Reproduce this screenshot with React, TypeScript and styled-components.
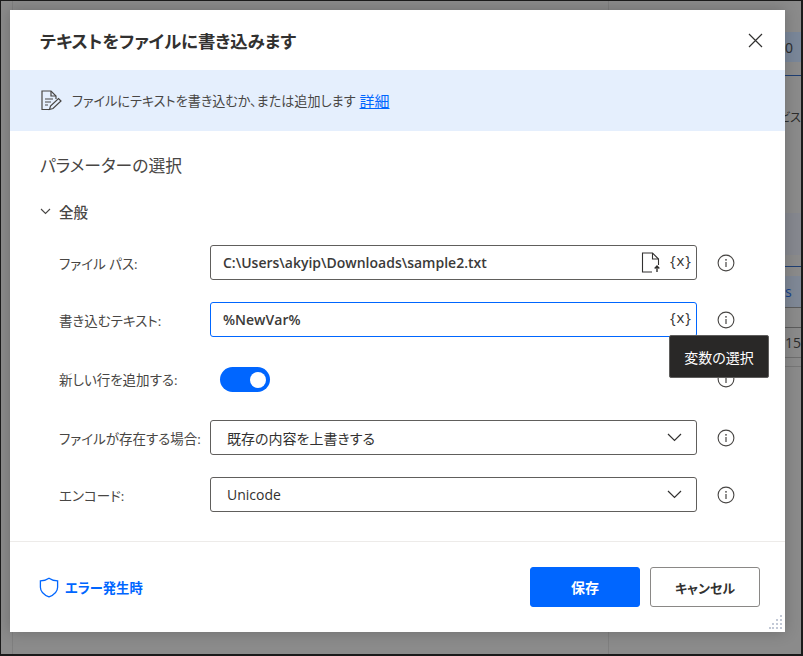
import React from "react";
import styled, { createGlobalStyle } from "styled-components";

const GlobalStyle = createGlobalStyle`
  html, body {
    margin: 0;
    padding: 0;
    background: #8a8a8a;
  }
  * {
    box-sizing: border-box;
  }
`;

const FONT = `"Open Sans", "Noto Sans CJK JP", sans-serif`;
const BLUE = "#0066ff";

const Page = styled.div`
  position: relative;
  width: 803px;
  height: 656px;
  overflow: hidden;
  font-family: ${FONT};
  font-feature-settings: "palt";
  color: #323130;
  border-style: solid;
  border-color: #1a1a1a;
  border-width: 1px 2px 2px 1px;
  background-color: #8b8b8b;
  background-image: linear-gradient(#7f7f7f, #7f7f7f), linear-gradient(#7f7f7f, #7f7f7f);
  background-repeat: no-repeat;
  background-size: 1px 100%, 1px 100%;
  background-position: 11px 0, 607px 0;
`;

const Backdrop = styled.div`
  display: flex;
  flex-direction: column;
  align-items: flex-end;
  height: 100%;
  font-size: 14px;
  color: #2c2c2c;
`;

const BackStrip = styled.div<{ $top: number; $height: number; $bg?: string; $line?: string; $end?: boolean }>`
  width: 24px;
  flex: none;
  height: ${({ $height }) => $height}px;
  margin-top: ${({ $top }) => $top}px;
  padding-left: 8px;
  display: flex;
  align-items: center;
  justify-content: ${({ $end }) => ($end ? "flex-end" : "flex-start")};
  white-space: nowrap;
  background: ${({ $bg }) => $bg || "transparent"};
  border-bottom: ${({ $line }) => ($line ? `1px solid ${$line}` : "none")};
`;

const BackText = styled.span<{ $color?: string; $size?: number }>`
  font-size: ${({ $size }) => $size || 14}px;
  color: ${({ $color }) => $color || "#2c2c2c"};
`;

const Modal = styled.div`
  position: absolute;
  left: 9px;
  top: 9px;
  width: 775px;
  height: 622px;
  display: flex;
  flex-direction: column;
  background: #fff;
  box-shadow: 0 0 14px rgba(0, 0, 0, 0.22);
`;

const Header = styled.div`
  height: 60px;
  flex: none;
  display: flex;
  align-items: center;
  justify-content: space-between;
  padding: 0 22px 0 30px;
`;

const Title = styled.h1`
  margin: 0;
  font-size: 17.4px;
  font-weight: 700;
  color: #323130;
`;

const CloseButton = styled.button`
  display: flex;
  padding: 0;
  border: none;
  background: none;
  color: #323130;
`;

const Banner = styled.div`
  height: 61px;
  flex: none;
  display: flex;
  align-items: center;
  padding-left: 30px;
  background: #e5effd;
  font-size: 13.1px;
  color: #484644;
`;

const BannerIcon = styled.svg`
  width: 22px;
  height: 24px;
  margin-right: 10px;
  flex: none;
`;

const MoreLink = styled.a`
  margin-left: 4px;
  font-size: 15px;
  color: ${BLUE};
  text-decoration: underline;
`;

const Body = styled.div`
  flex: 1;
  padding: 0 0 0 30px;
`;

const SectionTitle = styled.h2`
  margin: 23px 0 0;
  height: 24px;
  line-height: 24px;
  font-size: 16.8px;
  font-weight: 400;
  color: #484644;
`;

const GroupHeader = styled.div`
  display: flex;
  align-items: center;
  height: 20px;
  margin-top: 23px;
  font-size: 14.5px;
  font-weight: 500;
  color: #484644;
`;

const GroupChevron = styled.svg`
  width: 11px;
  height: 7px;
  margin-right: 8px;
`;

const Form = styled.div`
  display: flex;
  flex-direction: column;
  gap: 22px;
  margin-top: 24px;
  padding-left: 19px;
`;

const Row = styled.div<{ $height?: number }>`
  display: flex;
  align-items: center;
  height: ${({ $height }) => $height || 35}px;
`;

const Label = styled.label`
  width: 151px;
  flex: none;
  font-size: 13.5px;
  white-space: nowrap;
  color: #484644;
`;

const Field = styled.div<{ $focused?: boolean }>`
  width: 487px;
  height: 35px;
  flex: none;
  display: flex;
  align-items: center;
  padding: 0 4px 0 12px;
  border: 1px solid ${({ $focused }) => ($focused ? BLUE : "#605e5c")};
  border-radius: 3px;
  font-size: 14px;
  font-weight: 600;
  color: #3b3a39;
`;

const FieldValue = styled.span`
  flex: 1;
  white-space: nowrap;
`;

const VarButton = styled.span`
  font-size: 15px;
  font-weight: 400;
  letter-spacing: 1px;
  color: #323130;
  margin-top: -6px;
`;

const FileIcon = styled.svg`
  width: 21px;
  height: 21px;
  margin-right: 8px;
  flex: none;
`;

const SelectBox = styled.div`
  width: 487px;
  height: 35px;
  flex: none;
  display: flex;
  align-items: center;
  justify-content: space-between;
  padding: 0 14px 0 16px;
  border: 1px solid #605e5c;
  border-radius: 3px;
  font-size: 14px;
  color: #323130;
`;

const Toggle = styled.div`
  width: 50px;
  height: 25px;
  margin: 2px 427px 0 10px;
  flex: none;
  display: flex;
  align-items: center;
  justify-content: flex-end;
  padding-right: 4px;
  border-radius: 13px;
  background: ${BLUE};
`;

const Knob = styled.div`
  width: 16px;
  height: 16px;
  border-radius: 50%;
  background: #fff;
`;

const InfoIcon = styled.svg`
  width: 18px;
  height: 18px;
  margin-left: 20px;
  flex: none;
`;

const Footer = styled.div`
  height: 91px;
  flex: none;
  display: flex;
  align-items: center;
  justify-content: space-between;
  padding: 0 25px 0 29px;
  border-top: 1px solid #edebe9;
`;

const ErrorLink = styled.div`
  display: flex;
  align-items: center;
  gap: 6px;
  font-size: 13.3px;
  font-weight: 700;
  color: ${BLUE};
`;

const Actions = styled.div`
  display: flex;
  gap: 10px;
`;

const Button = styled.button<{ $primary?: boolean }>`
  width: 110px;
  height: 40px;
  font-family: ${FONT};
  font-feature-settings: "palt";
  font-size: ${({ $primary }) => ($primary ? 14 : 13)}px;
  font-weight: 700;
  border-radius: 3px;
  border: 1px solid ${({ $primary }) => ($primary ? BLUE : "#8a8886")};
  background: ${({ $primary }) => ($primary ? BLUE : "#fff")};
  color: ${({ $primary }) => ($primary ? "#fff" : "#323130")};
`;

const Tooltip = styled.div`
  position: absolute;
  left: 668px;
  top: 334px;
  width: 100px;
  height: 43px;
  display: flex;
  align-items: center;
  justify-content: center;
  background: #292827;
  border: 1px solid #5f5e5d;
  border-radius: 2px;
  font-size: 14px;
  color: #fff;
`;

const Grip = styled.svg`
  position: absolute;
  right: 2px;
  bottom: 2px;
  width: 14px;
  height: 15px;
`;

const Info = () => (
  <InfoIcon viewBox="0 0 18 18" fill="none">
    <circle cx="9" cy="9" r="7.9" stroke="#484644" strokeWidth="1.1" />
    <rect x="8.4" y="8" width="1.2" height="5" fill="#484644" />
    <circle cx="9" cy="5.8" r="0.9" fill="#484644" />
  </InfoIcon>
);

const Chevron = () => (
  <svg width="15" height="9" viewBox="0 0 15 9" fill="none">
    <path d="M1 1l6.5 6.5L14 1" stroke="#323130" strokeWidth="1.2" />
  </svg>
);

const App: React.FC = () => {
  return (
    <>
      <GlobalStyle />
      <Page>
        <Backdrop>
          <BackStrip $top={31} $height={30} $bg="#7a8799">
            <BackText>0</BackText>
          </BackStrip>
          <BackStrip $top={0} $height={14} $line="#1f3f73" />
          <BackStrip $top={30} $height={22} $end>
            <BackText $size={12}>ビス</BackText>
          </BackStrip>
          <BackStrip $top={85} $height={42} $bg="#86888f" />
          <BackStrip $top={0} $height={12} $line="#1f3f73" />
          <BackStrip $top={9} $height={32} $bg="#7f8896" $line="#5c5c5c">
            <BackText $color="#14418c">s</BackText>
          </BackStrip>
          <BackStrip $top={0} $height={20} $line="#5c5c5c" />
          <BackStrip $top={0} $height={30} $line="#6e6e6e">
            <BackText>15</BackText>
          </BackStrip>
          <BackStrip $top={8} $height={1} $bg="#777" />
        </Backdrop>

        <Modal>
          <Header>
            <Title>テキストをファイルに書き込みます</Title>
            <CloseButton aria-label="閉じる">
              <svg width="15" height="15" viewBox="0 0 15 15" fill="none">
                <path d="M1 1l13 13M14 1L1 14" stroke="#323130" strokeWidth="1.2" />
              </svg>
            </CloseButton>
          </Header>

          <Banner>
            <BannerIcon viewBox="0 0 22 24" fill="none" stroke="#484644" strokeWidth="1.2">
              <path d="M10 20.5H2V2h9l5 5v3" />
              <path d="M11 2v5h5" />
              <path d="M5 10h8M5 13h6M5 16h3" />
              <path d="M9.5 20.5l1-3.5 8-7.5 2.5 2.5-8 7.5z" />
            </BannerIcon>
            ファイルにテキストを書き込むか、または追加します
            <MoreLink href="#">詳細</MoreLink>
          </Banner>

          <Body>
            <SectionTitle>パラメーターの選択</SectionTitle>
            <GroupHeader>
              <GroupChevron viewBox="0 0 11 7" fill="none">
                <path d="M1 1l4.5 4.5L10 1" stroke="#484644" strokeWidth="1.1" />
              </GroupChevron>
              全般
            </GroupHeader>

            <Form>
              <Row>
                <Label>ファイル パス:</Label>
                <Field>
                  <FieldValue>C:\Users\akyip\Downloads\sample2.txt</FieldValue>
                  <FileIcon viewBox="0 0 21 21" fill="none" stroke="#323130" strokeWidth="1.1">
                    <path d="M11 20H1.5V1h10l6 6v6" />
                    <path d="M11.5 1v6h6" />
                    <path d="M16 20v-5.5M13.700 16.500l2.300-2.500 2.300 2.500" strokeWidth="1.4" />
                  </FileIcon>
                  <VarButton>{"{x}"}</VarButton>
                </Field>
                <Info />
              </Row>

              <Row>
                <Label>書き込むテキスト:</Label>
                <Field $focused>
                  <FieldValue>%NewVar%</FieldValue>
                  <VarButton>{"{x}"}</VarButton>
                </Field>
                <Info />
              </Row>

              <Row $height={39}>
                <Label>新しい行を追加する:</Label>
                <Toggle>
                  <Knob />
                </Toggle>
                <Info />
              </Row>

              <Row>
                <Label>ファイルが存在する場合:</Label>
                <SelectBox>
                  既存の内容を上書きする
                  <Chevron />
                </SelectBox>
                <Info />
              </Row>

              <Row>
                <Label>エンコード:</Label>
                <SelectBox>
                  Unicode
                  <Chevron />
                </SelectBox>
                <Info />
              </Row>
            </Form>
          </Body>

          <Footer>
            <ErrorLink>
              <svg width="20" height="21" viewBox="0 0 20 21" fill="none">
                <path
                  d="M10 1.2c2.4 1.800 5 2.600 8.600 2.700v6.300c0 4.300-3.300 7.500-8.600 9.700-5.300-2.200-8.600-5.400-8.600-9.700V3.900C5 3.800 7.600 3 10 1.200z"
                  stroke={BLUE}
                  strokeWidth="1.3"
                />
              </svg>
              エラー発生時
            </ErrorLink>
            <Actions>
              <Button $primary>保存</Button>
              <Button>キャンセル</Button>
            </Actions>
          </Footer>

          <Grip viewBox="0 0 14 15" fill="#c3c9d6">
            <rect x="11" y="0" width="2" height="2" />
            <rect x="11" y="4" width="2" height="2" />
            <rect x="7" y="4" width="2" height="2" />
            <rect x="11" y="8" width="2" height="2" />
            <rect x="7" y="8" width="2" height="2" />
            <rect x="3" y="8" width="2" height="2" />
            <rect x="11" y="12" width="2" height="2" />
            <rect x="7" y="12" width="2" height="2" />
            <rect x="3" y="12" width="2" height="2" />
            <rect x="0" y="12" width="2" height="2" />
          </Grip>
        </Modal>

        <Tooltip>変数の選択</Tooltip>
      </Page>
    </>
  );
};

export default App;
